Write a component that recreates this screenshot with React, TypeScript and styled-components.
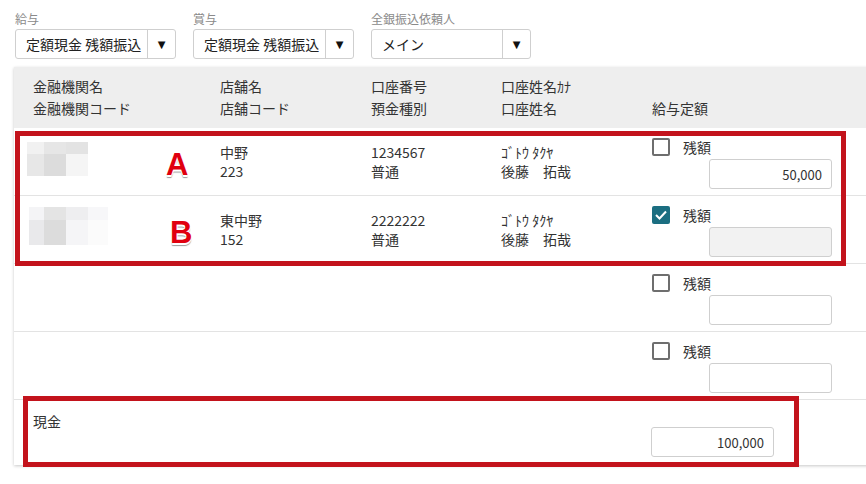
import React from 'react';
import styled, { createGlobalStyle } from 'styled-components';

const GlobalStyle = createGlobalStyle`
  html, body { margin: 0; padding: 0; background: #fff; overflow: hidden; }
  body { font-family: "Noto Sans CJK JP", "Noto Sans", sans-serif; color: #333; }
`;

const Page = styled.div`
  position: relative;
  width: 866px;
  height: 484px;
  overflow: hidden;
`;

const Filters = styled.div`
  display: flex;
  gap: 17px;
  padding: 11px 0 0 15px;
`;

const Field = styled.div`
  display: flex;
  flex-direction: column;
  gap: 3px;
`;

const FieldLabel = styled.div`
  font-size: 12px;
  line-height: 15px;
  color: #8a8a8a;
`;

const Select = styled.div<{ $w: number }>`
  width: ${(p) => p.$w}px;
  height: 30px;
  box-sizing: border-box;
  border: 1px solid #cfcfcf;
  border-radius: 3px;
  display: flex;
  background: #fff;
`;

const SelectValue = styled.div`
  flex: 1;
  padding-left: 10px;
  display: flex;
  align-items: center;
  font-size: 14px;
  color: #222;
  white-space: nowrap;
`;

const SelectArrow = styled.div`
  width: 27px;
  border-left: 1px solid #cfcfcf;
  display: flex;
  align-items: center;
  justify-content: center;
  font-family: "DejaVu Sans", sans-serif;
  font-size: 10px;
  color: #111;
`;

const Card = styled.div`
  margin: 8px 0 0 14px;
  width: 880px;
  background: #fff;
  box-shadow: 0 1px 3px rgba(0, 0, 0, 0.22);
`;

const HeaderRow = styled.div`
  display: grid;
  grid-template-columns: 187px 151px 130px 151px 1fr;
  padding: 8px 0 9px 19px;
  background: #eeeeee;
  font-size: 14px;
  line-height: 22px;
  color: #333;
`;

const Cell = styled.div`
  display: flex;
  flex-direction: column;
  white-space: nowrap;
`;

const Blank = styled.div`
  height: 22px;
`;

const DataRow = styled.div`
  display: grid;
  grid-template-columns: 187px 151px 130px 151px 1fr;
  height: 68px;
  box-sizing: border-box;
  padding-left: 19px;
  border-bottom: 1px solid #e3e3e3;
  font-size: 14px;
  line-height: 19px;
  color: #333;
`;

const TextCell = styled.div`
  padding-top: 15px;
  display: flex;
  flex-direction: column;
  white-space: nowrap;
`;

const MosaicCell = styled.div<{ $top: number; $left: number }>`
  padding-top: ${(p) => p.$top}px;
  margin-left: ${(p) => p.$left}px;
`;

const AmountCell = styled.div`
  padding-top: 10px;
  display: flex;
  flex-direction: column;
`;

const CheckLine = styled.div`
  display: flex;
  align-items: center;
  gap: 13px;
  height: 18px;
  white-space: nowrap;
`;

const CheckBox = styled.div<{ $checked?: boolean }>`
  width: 18px;
  height: 18px;
  box-sizing: border-box;
  border-radius: 2px;
  border: ${(p) => (p.$checked ? 'none' : '2px solid #6e6e6e')};
  background: ${(p) => (p.$checked ? '#1b6e81' : '#fff')};
  display: flex;
  align-items: center;
  justify-content: center;
`;

const AmountInput = styled.div<{ $disabled?: boolean }>`
  width: 123px;
  height: 30px;
  box-sizing: border-box;
  border: 1px solid #cfcfcf;
  border-radius: 3px;
  background: ${(p) => (p.$disabled ? '#f2f2f2' : '#fff')};
  display: flex;
  align-items: center;
  justify-content: flex-end;
  padding-right: 9px;
  font-size: 13px;
  color: #333;
`;

const Indented = styled.div`
  margin: 3px 0 0 57px;
`;

const CashRow = styled.div`
  display: grid;
  grid-template-columns: 618px 123px;
  height: 65px;
  box-sizing: border-box;
  padding: 12px 0 8px 19px;
  font-size: 14px;
  line-height: 19px;
  color: #333;
`;

const CashLabel = styled.div`
  align-self: start;
`;

const CashInputWrap = styled.div`
  align-self: end;
`;

const Frame = styled.div<{ $l: number; $t: number; $w: number; $h: number }>`
  position: absolute;
  left: ${(p) => p.$l}px;
  top: ${(p) => p.$t}px;
  width: ${(p) => p.$w}px;
  height: ${(p) => p.$h}px;
  box-sizing: border-box;
  border: 5px solid #c3131c;
  pointer-events: none;
`;

const Marker = styled.div<{ $l: number; $t: number }>`
  position: absolute;
  left: ${(p) => p.$l}px;
  top: ${(p) => p.$t}px;
  font-family: "Liberation Sans", Arial, sans-serif;
  font-weight: 700;
  font-size: 31px;
  line-height: 31px;
  color: #e0000f;
  text-shadow: -1px 0 0 #fff, 1px 0 0 #fff, 0 -1px 0 #fff, 0 2px 0 #fff,
    0 3px 1px rgba(0, 0, 0, 0.4);
`;

type Block = [number, number, number, number, string];

const Mosaic: React.FC<{ w: number; h: number; blocks: Block[] }> = ({ w, h, blocks }) => (
  <svg width={w} height={h} viewBox={`0 0 ${w} ${h}`} style={{ display: 'block' }}>
    {blocks.map(([x, y, bw, bh, c], i) => (
      <rect key={i} x={x} y={y} width={bw} height={bh} fill={c} />
    ))}
  </svg>
);

const mosaicA: Block[] = [
  [0, 0, 17, 12, '#f1f1f1'],
  [17, 0, 22, 12, '#e6e6e6'],
  [39, 0, 22, 12, '#e3e3e3'],
  [0, 12, 17, 22, '#e7e7e7'],
  [17, 12, 22, 22, '#dcdcdc'],
  [39, 12, 22, 22, '#f5f5f5'],
];

const mosaicB: Block[] = [
  [0, 0, 15, 13, '#f4f4f6'],
  [15, 0, 22, 13, '#e4e4e4'],
  [37, 0, 22, 13, '#eeeef0'],
  [59, 0, 20, 13, '#f7f7f9'],
  [0, 13, 15, 25, '#e9e9eb'],
  [15, 13, 22, 25, '#dcdcdc'],
  [37, 13, 22, 25, '#f5f5f7'],
  [59, 13, 20, 25, '#fbfbfb'],
];

const Check = () => (
  <svg width="14" height="12" viewBox="0 0 14 12">
    <polyline points="2,6 5.5,9.5 12,2.5" fill="none" stroke="#fff" strokeWidth="2" />
  </svg>
);

type Row = {
  mosaic?: { blocks: Block[]; w: number; h: number; top: number; left: number };
  branch?: [string, string];
  account?: [string, string];
  name?: [string, string];
  checked?: boolean;
  amount?: string;
};

const rows: Row[] = [
  {
    mosaic: { blocks: mosaicA, w: 61, h: 34, top: 14, left: -6 },
    branch: ['中野', '223'],
    account: ['1234567', '普通'],
    name: ['ｺﾞﾄｳ ﾀｸﾔ', '後藤　拓哉'],
    amount: '50,000',
  },
  {
    mosaic: { blocks: mosaicB, w: 79, h: 38, top: 11, left: -4 },
    branch: ['東中野', '152'],
    account: ['2222222', '普通'],
    name: ['ｺﾞﾄｳ ﾀｸﾔ', '後藤　拓哉'],
    checked: true,
  },
  {},
  {},
];

const Lines: React.FC<{ v?: [string, string] }> = ({ v }) => (
  <TextCell>
    {v && (
      <>
        <span>{v[0]}</span>
        <span>{v[1]}</span>
      </>
    )}
  </TextCell>
);

export default function App() {
  return (
    <Page>
      <GlobalStyle />
      <Filters>
        <Field>
          <FieldLabel>給与</FieldLabel>
          <Select $w={161}>
            <SelectValue>定額現金 残額振込</SelectValue>
            <SelectArrow>▼</SelectArrow>
          </Select>
        </Field>
        <Field>
          <FieldLabel>賞与</FieldLabel>
          <Select $w={161}>
            <SelectValue>定額現金 残額振込</SelectValue>
            <SelectArrow>▼</SelectArrow>
          </Select>
        </Field>
        <Field>
          <FieldLabel>全銀振込依頼人</FieldLabel>
          <Select $w={160}>
            <SelectValue>メイン</SelectValue>
            <SelectArrow>▼</SelectArrow>
          </Select>
        </Field>
      </Filters>

      <Card>
        <HeaderRow>
          <Cell>
            <span>金融機関名</span>
            <span>金融機関コード</span>
          </Cell>
          <Cell>
            <span>店舗名</span>
            <span>店舗コード</span>
          </Cell>
          <Cell>
            <span>口座番号</span>
            <span>預金種別</span>
          </Cell>
          <Cell>
            <span>口座姓名ｶﾅ</span>
            <span>口座姓名</span>
          </Cell>
          <Cell>
            <Blank />
            <span>給与定額</span>
          </Cell>
        </HeaderRow>

        {rows.map((r, i) => (
          <DataRow key={i}>
            {r.mosaic ? (
              <MosaicCell $top={r.mosaic.top} $left={r.mosaic.left}>
                <Mosaic w={r.mosaic.w} h={r.mosaic.h} blocks={r.mosaic.blocks} />
              </MosaicCell>
            ) : (
              <div />
            )}
            <Lines v={r.branch} />
            <Lines v={r.account} />
            <Lines v={r.name} />
            <AmountCell>
              <CheckLine>
                <CheckBox $checked={r.checked}>{r.checked && <Check />}</CheckBox>
                <span>残額</span>
              </CheckLine>
              <Indented>
                <AmountInput $disabled={r.checked}>{r.amount}</AmountInput>
              </Indented>
            </AmountCell>
          </DataRow>
        ))}

        <CashRow>
          <CashLabel>現金</CashLabel>
          <CashInputWrap>
            <AmountInput>100,000</AmountInput>
          </CashInputWrap>
        </CashRow>
      </Card>

      <Frame $l={15} $t={131} $w={831} $h={135} />
      <Frame $l={23} $t={396} $w={776} $h={71} />
      <Marker $l={166} $t={149}>A</Marker>
      <Marker $l={170} $t={217}>B</Marker>
    </Page>
  );
}
